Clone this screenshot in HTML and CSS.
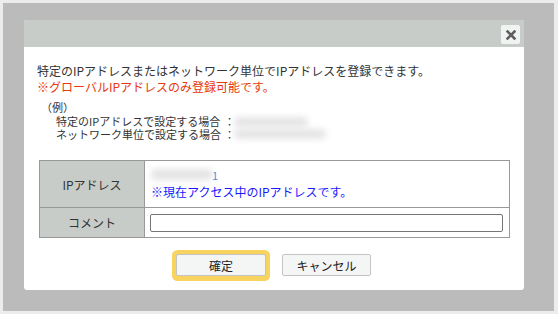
FILE: index.html
```html
<!DOCTYPE html>
<html lang="ja">
<head>
<meta charset="utf-8">
<link rel="stylesheet" href="styles.css">
</head>
<body>
<div class="stage">
  <div class="dialog">
    <div class="dialog-head">
      <button class="close" aria-label="close">
        <svg width="10" height="10" viewBox="0 0 10 10"><path d="M1.5 1.5 L8.5 8.5 M8.5 1.5 L1.5 8.5" stroke="#5f5f5f" stroke-width="2.6" stroke-linecap="square"/></svg>
      </button>
    </div>
    <div class="dialog-body">
      <p class="lead">特定のIPアドレスまたはネットワーク単位でIPアドレスを登録できます。</p>
      <p class="warn">※グローバルIPアドレスのみ登録可能です。</p>
      <div class="example">
        <div class="ex-title">（例）</div>
        <div class="ex-row"><span class="ex-label">特定のIPアドレスで設定する場合</span><span class="colon">：</span><span class="blur b1"></span></div>
        <div class="ex-row"><span class="ex-label">ネットワーク単位で設定する場合</span><span class="colon">：</span><span class="blur b2"></span></div>
      </div>
      <table class="form">
        <tr class="row-ip">
          <th>IPアドレス</th>
          <td>
            <div class="ipval"><span class="blur b3"></span><span class="ipend">1</span></div>
            <div class="note">※現在アクセス中のIPアドレスです。</div>
          </td>
        </tr>
        <tr class="row-comment">
          <th>コメント</th>
          <td><input class="comment" type="text"></td>
        </tr>
      </table>
      <div class="actions">
        <button class="btn focus">確定</button>
        <button class="btn">キャンセル</button>
      </div>
    </div>
  </div>
</div>
</body>
</html>
```
FILE: styles.css
```css
* { box-sizing: border-box; }
html, body { margin: 0; padding: 0; }
body {
  background: #ececec;
  font-family: "Noto Sans CJK JP", "Noto Sans", sans-serif;
  color: #333;
  width: 558px;
  height: 314px;
  overflow: hidden;
}
.stage {
  margin: 3px 4px 0 3px;
  height: 308px;
  background: #bbbbbb;
  padding: 17px 0 0 21px;
}
.dialog {
  width: 500px;
  height: 270px;
  background: #fff;
  border-radius: 3px;
  overflow: hidden;
}
.dialog-head {
  height: 27px;
  background: #c8ccc8;
  display: flex;
  justify-content: flex-end;
  align-items: center;
  padding-right: 4px;
}
.close {
  width: 19px;
  height: 19px;
  border: none;
  border-radius: 2px;
  background: #f1f2f2;
  padding: 0;
  display: flex;
  align-items: center;
  justify-content: center;
  margin-top: 2px;
}
.dialog-body {
  padding: 16px 14px 0 13px;
}
p { margin: 0; }
.lead, .warn {
  font-size: 12px;
  line-height: 16px;
}
.warn { color: #e8380d; }
.example {
  margin-top: 6px;
  padding-left: 4px;
  font-size: 11px;
  line-height: 13px;
}
.ex-title { margin-bottom: 1px; }
.ex-row {
  display: flex;
  align-items: center;
  height: 13px;
  line-height: 13px;
  padding-left: 15px;
}
.ex-row + .ex-row { margin-top: -0.5px; }
.ex-label { width: 168px; }
.colon { width: 10px; }
.blur {
  display: inline-block;
  height: 10px;
  background: #e4e4e4;
  filter: blur(3px);
  border-radius: 5px;
}
.b1 { width: 74px; }
.b2 { width: 92px; }
.b3 { width: 62px; height: 11px; }
.form {
  margin: 19.5px 0 0 2px;
  width: 471px;
  border-collapse: collapse;
  font-size: 12px;
}
.form th, .form td {
  border: 1px solid #999;
  padding: 0;
}
.form th {
  width: 105px;
  background: #c8ccc8;
  font-weight: normal;
  color: #333;
  text-align: center;
}
.form td { padding-left: 6px; }
.row-ip th, .row-ip td { height: 47px; }
.row-comment th, .row-comment td { height: 30px; }
.ipval {
  display: flex;
  align-items: center;
  height: 16px;
  line-height: 16px;
  margin-top: -2px;
}
.ipend { color: #4a7fd0; font-size: 11px; margin-left: -1px; }
.note {
  color: #1a1aff;
  line-height: 16px;
  margin-top: 1px;
}
.comment {
  display: block;
  width: 353px;
  height: 18px;
  border: 1px solid #767676;
  border-radius: 2px;
  margin-left: -1px;
}
.actions {
  display: flex;
  justify-content: center;
  gap: 16px;
  margin-top: 16px;
}
.btn {
  width: 89px;
  height: 22px;
  background: #f4f5f5;
  border: 1px solid #c4c4c4;
  border-radius: 2px;
  font-family: "Noto Sans CJK JP", "Noto Sans", sans-serif;
  font-size: 12px;
  color: #222;
  padding: 0;
}
.btn.focus {
  width: 90px;
  box-shadow: 0 0 0 4px #f8d35e, 0 1px 0 4px #f8d35e;
}
```
